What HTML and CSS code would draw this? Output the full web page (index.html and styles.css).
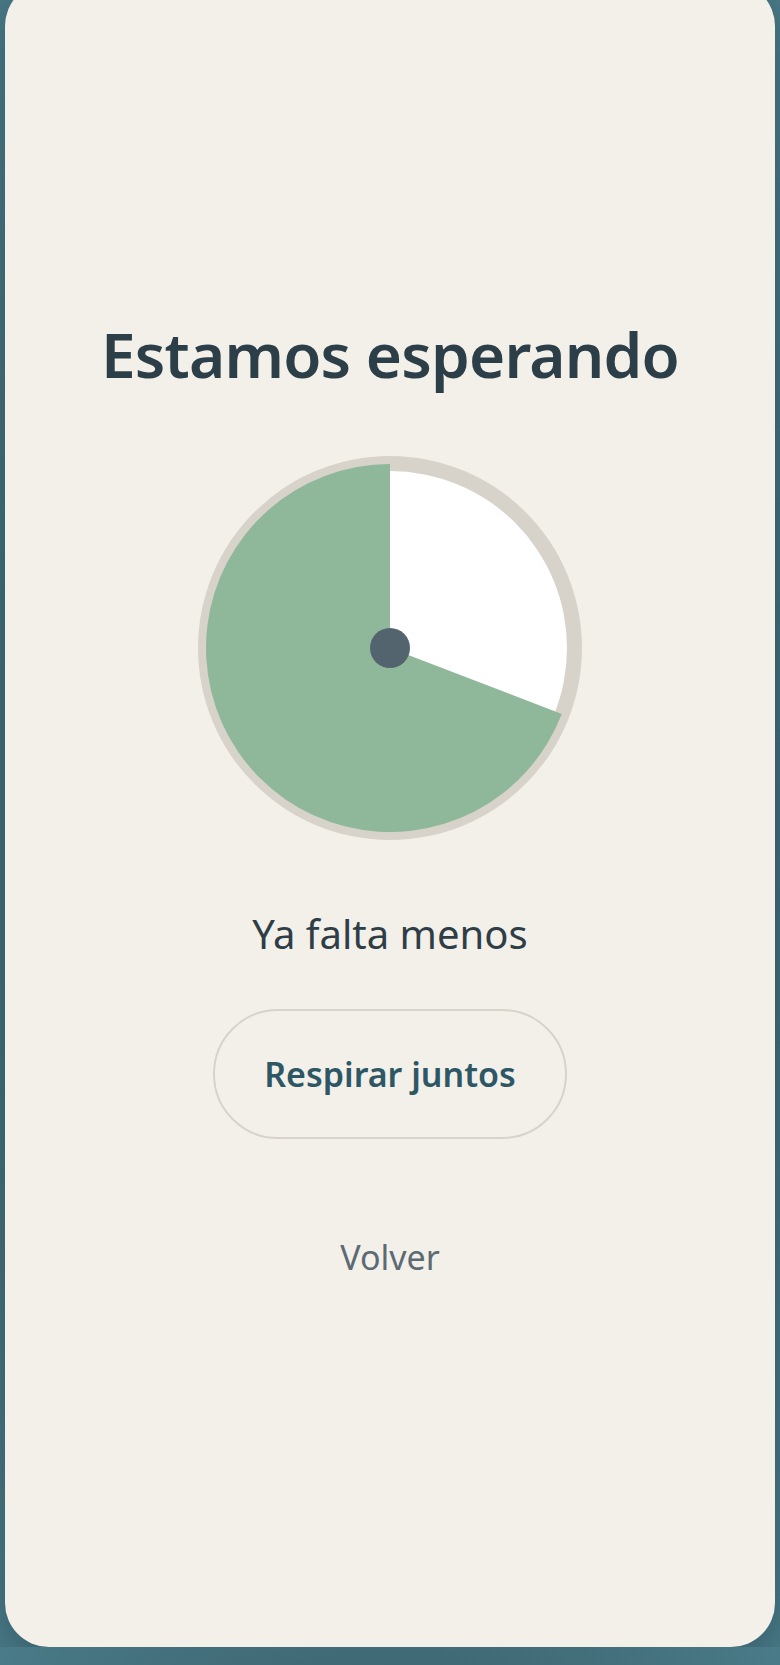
FILE: index.html
```
<!DOCTYPE html>
<html lang="es">

<head>
    <meta charset="UTF-8">
    <meta name="viewport" content="width=device-width, initial-scale=1.0">
    <title>Estamos esperando</title>
    <link rel="stylesheet" href="styles.css">
</head>

<body>
    <div class="screen">
        <h1 class="title">Estamos esperando</h1>

        <!-- temporizador: la parte verde es el tiempo que ya paso -->
        <svg class="timer" width="386" height="386" viewBox="-193 -193 386 386">
            <circle cx="0" cy="0" r="192" fill="#d8d3ca" />
            <circle cx="0" cy="0" r="177" fill="#ffffff" />
            <path d="M0 0 L0 -184 A184 184 0 1 0 171.8 65.9 Z" fill="#8fb89b" />
            <circle cx="0" cy="0" r="20" fill="#53646e" />
        </svg>

        <p class="status">Ya falta menos</p>

        <button class="breathe-btn">Respirar juntos</button>

        <a href="#" class="back-link">Volver</a>
    </div>
</body>

</html>
```

FILE: styles.css
```
body {
    margin: 0;
    background: radial-gradient(ellipse at center, #3d6470 60%, #4a7b88 100%);
    background-color: #416b77;
    font-family: "Noto Sans", "Open Sans", sans-serif;
    overflow: hidden;
}

.screen {
    width: 770px;
    height: 1665px;
    margin: -18px auto 0;
    background-color: #f3f0ea;
    border-radius: 44px;
    box-shadow: 0 12px 40px rgba(30, 60, 70, 0.45);
    display: flex;
    flex-direction: column;
    align-items: center;
    padding-top: 332px;
    box-sizing: border-box;
}

.title {
    margin: 0;
    font-size: 62px;
    line-height: 80px;
    font-weight: 600;
    color: #2c3e48;
    letter-spacing: -0.8px;
}

.timer {
    display: block;
    margin-top: 61px;
}

.status {
    margin: 69px 0 0;
    font-size: 40px;
    line-height: 48px;
    color: #2e3d46;
}

.breathe-btn {
    margin-top: 51px;
    width: 354px;
    height: 130px;
    border: 2px solid #d8d3ca;
    border-radius: 999px;
    background: transparent;
    color: #2e5766;
    font-family: inherit;
    font-size: 34px;
    font-weight: 600;
    cursor: pointer;
}

.back-link {
    margin-top: 98px;
    font-size: 34px;
    line-height: 40px;
    color: #5c6a73;
    text-decoration: none;
}
```
